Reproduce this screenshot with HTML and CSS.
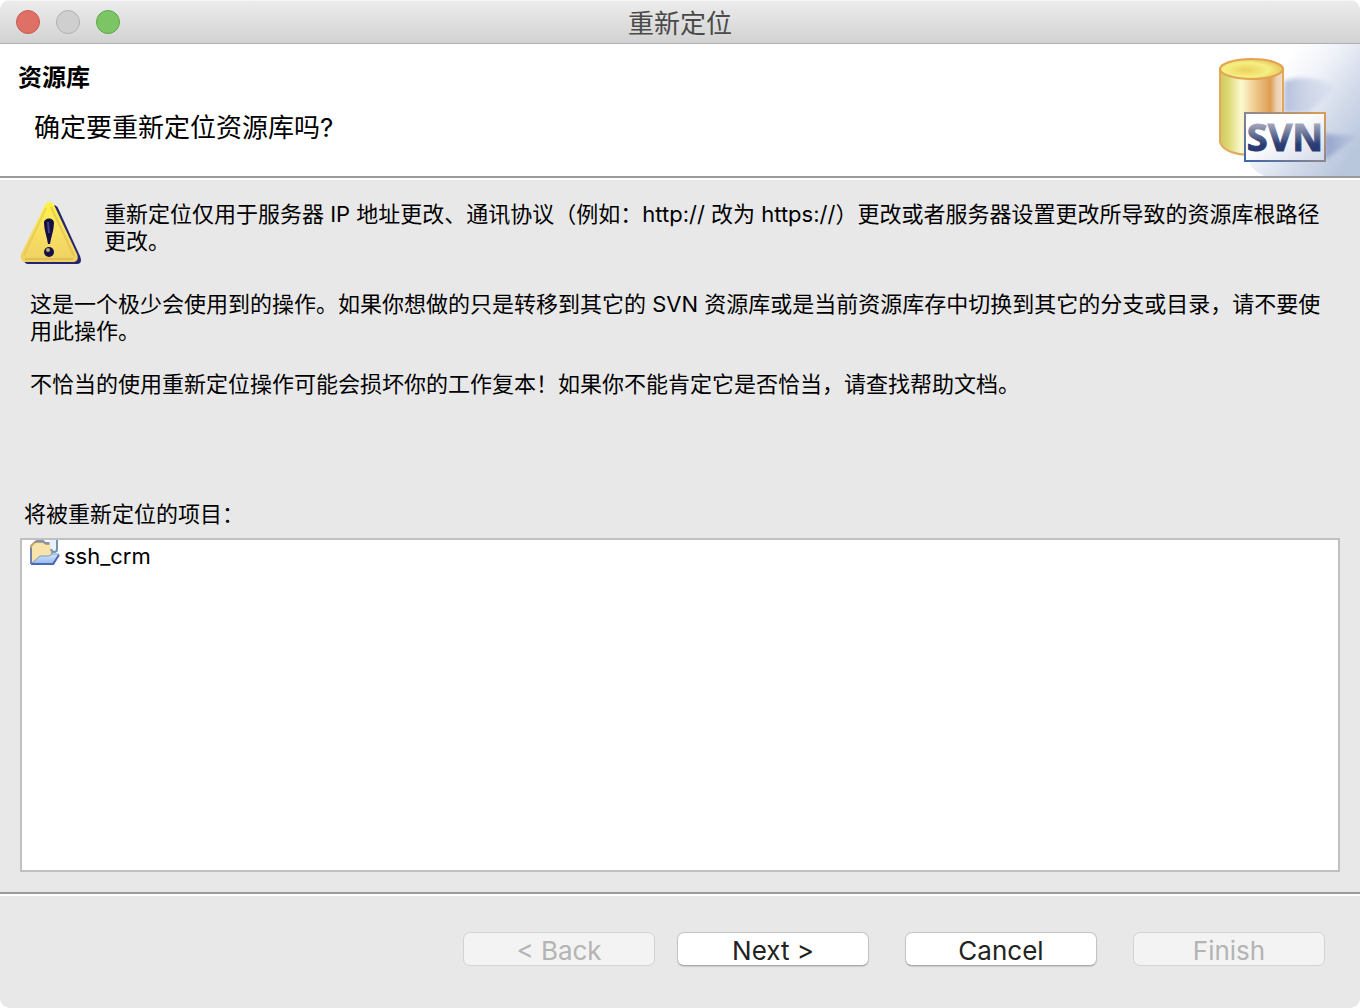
FILE: index.html
```html
<!DOCTYPE html>
<html lang="zh-CN">
<head>
  <meta charset="UTF-8">
  <meta name="viewport" content="width=device-width, initial-scale=1.0">
  <title>重新定位</title>
  <link rel="stylesheet" href="styles.css">
</head>
<body>
<div class="window">
  <div class="titlebar">
    <div class="lights">
      <button type="button" class="light light-close" aria-label="Close"></button>
      <button type="button" class="light light-min" aria-label="Minimize" disabled></button>
      <button type="button" class="light light-zoom" aria-label="Zoom"></button>
    </div>
    <h1>重新定位</h1>
  </div>

  <header class="banner">
    <div class="banner-text">
      <h2>资源库</h2>
      <p>确定要重新定位资源库吗?</p>
    </div>
    <svg class="banner-art" width="150" height="132" viewBox="0 0 150 132" role="img" aria-label="SVN">
      <defs>
        <linearGradient id="sky" gradientUnits="userSpaceOnUse" x1="62" y1="34" x2="150" y2="100">
          <stop offset="0" stop-color="#fff"/>
          <stop offset="0.3" stop-color="#f0f3f9"/>
          <stop offset="0.65" stop-color="#d3dbea"/>
          <stop offset="1" stop-color="#b9c7dd"/>
        </linearGradient>
        <linearGradient id="shade" x1="0" y1="0" x2="1" y2="0">
          <stop offset="0" stop-color="#b4bfdb"/>
          <stop offset="1" stop-color="#cdd6e8" stop-opacity="0.3"/>
        </linearGradient>
        <linearGradient id="shade2" x1="0" y1="0" x2="1" y2="0">
          <stop offset="0" stop-color="#94a3cc"/>
          <stop offset="1" stop-color="#a9b6d8" stop-opacity="0.4"/>
        </linearGradient>
        <linearGradient id="can" x1="0" y1="0" x2="1" y2="0">
          <stop offset="0" stop-color="#d2c95e"/>
          <stop offset="0.12" stop-color="#dbd76f"/>
          <stop offset="0.34" stop-color="#fbf9d2"/>
          <stop offset="0.55" stop-color="#f0cb8e"/>
          <stop offset="0.8" stop-color="#dd9d55"/>
          <stop offset="0.9" stop-color="#eccfae"/>
          <stop offset="1" stop-color="#f3e0ca"/>
        </linearGradient>
        <radialGradient id="lid" cx="0.42" cy="0.55" r="0.6">
          <stop offset="0" stop-color="#ecd05c"/>
          <stop offset="0.6" stop-color="#f4f083"/>
          <stop offset="1" stop-color="#e9bf59"/>
        </radialGradient>
        <linearGradient id="plate" x1="0" y1="0" x2="1" y2="1">
          <stop offset="0.4" stop-color="#fff"/>
          <stop offset="1" stop-color="#d3d9e9"/>
        </linearGradient>
        <linearGradient id="frame" x1="0" y1="1" x2="1" y2="0">
          <stop offset="0" stop-color="#3f67a8"/>
          <stop offset="0.5" stop-color="#8c8791"/>
          <stop offset="1" stop-color="#dc9c50"/>
        </linearGradient>
        <linearGradient id="letters" gradientUnits="userSpaceOnUse" x1="0" y1="80" x2="0" y2="107">
          <stop offset="0" stop-color="#a3a7ba"/>
          <stop offset="0.75" stop-color="#2c3d73"/>
          <stop offset="1" stop-color="#26386f"/>
        </linearGradient>
        <filter id="soft" x="-20%" y="-20%" width="140%" height="140%">
          <feGaussianBlur stdDeviation="2"/>
        </filter>
      </defs>
      <path d="M84 0H150V132H54C38 124 32 112 40 90Z" fill="url(#sky)"/>
      <path d="M74 37C88 31 112 34 126 43L98 69H74Z" fill="url(#shade)" filter="url(#soft)"/>
      <path d="M115 90L148 92L115 116Z" fill="url(#shade2)" filter="url(#soft)"/>
      <path d="M10 25V98C12 106 24 111 42 111S71 106 73 98V25Z" fill="url(#can)" stroke="#e3a860" stroke-width="2"/>
      <ellipse cx="41.500" cy="25" rx="31.500" ry="10" fill="url(#lid)" stroke="#e3a251" stroke-width="2"/>
      <rect x="35" y="69" width="80" height="48" fill="url(#plate)" stroke="url(#frame)" stroke-width="2"/>
      <text class="banner-svn" x="75" y="107" text-anchor="middle" fill="url(#letters)" stroke="url(#letters)">SVN</text>
    </svg>
  </header>

  <main class="content">
    <div class="notice">
      <svg class="warning" width="64" height="64" viewBox="0 0 64 64" role="img" aria-label="Warning">
        <defs>
          <linearGradient id="warn" x1="0" y1="0" x2="0" y2="1">
            <stop offset="0" stop-color="#fff33f"/>
            <stop offset="0.4" stop-color="#fae462"/>
            <stop offset="1" stop-color="#efd063"/>
          </linearGradient>
        </defs>
        <path d="M32 5C35 3 37 5 38 7L60 55C62 60 61 63 57 63H9C5 63 4 61 4 58Z" fill="#23266e"/>
        <path d="M25 4C27 0 32 0 34 4L57 53C59 58 57 61 53 61H6C1 61 0 57 1 53Z" fill="url(#warn)"/>
        <path d="M31 6L54 55" fill="none" stroke="#dfb84f" stroke-width="2" opacity="0.6"/>
        <path d="M26 7L4 54" fill="none" stroke="#dcbc52" stroke-width="2" opacity="0.5"/>
        <path d="M5 58H53" stroke="#d8b04c" stroke-width="2" opacity="0.6"/>
        <path d="M24 22C24 16 34 16 34 22C34 29 31 36 30 43H28C27 36 24 29 24 22Z" fill="#140f45"/>
        <circle cx="29" cy="51" r="5" fill="#140f45"/>
        <path d="M28 21L29 32" stroke="#4a447c" stroke-width="2"/>
        <circle cx="28" cy="49" r="2" fill="#b6a778"/>
      </svg>
      <p>重新定位仅用于服务器 IP 地址更改、通讯协议（例如：http:// 改为 https://）更改或者服务器设置更改所导致的资源库根路径更改。</p>
    </div>
    <p class="para">这是一个极少会使用到的操作。如果你想做的只是转移到其它的 SVN 资源库或是当前资源库存中切换到其它的分支或目录，请不要使用此操作。</p>
    <p class="para">不恰当的使用重新定位操作可能会损坏你的工作复本！如果你不能肯定它是否恰当，请查找帮助文档。</p>

    <h3 id="projects-label">将被重新定位的项目：</h3>
    <ul class="projects" aria-labelledby="projects-label">
      <li>
        <svg width="32" height="26" viewBox="0 0 32 26" aria-hidden="true">
          <defs>
            <linearGradient id="flap" x1="0" y1="0" x2="0" y2="1">
              <stop offset="0" stop-color="#d3e6fb"/>
              <stop offset="1" stop-color="#94b9ea"/>
            </linearGradient>
          </defs>
          <path d="M1 23V6L5 2H14L16 4H22V16L8 23Z" fill="#f8e3ab" stroke="#c0a270" stroke-width="2"/>
          <path d="M5 2L7 1H13L15 3H22" fill="none" stroke="#8792ad" stroke-width="2"/>
          <path d="M19 0H28V12H21Z" fill="#e9f0f8"/>
          <path d="M27 0V9C27 13 22 13 21 9" fill="none" stroke="#7594b4" stroke-width="2"/>
          <path d="M1 24L10 16H19L22 14H29L24 24Z" fill="url(#flap)" stroke="#7b98d0" stroke-width="1"/>
          <path d="M1 24H23L29 15" fill="none" stroke="#4c69b5" stroke-width="2"/>
          <path d="M1 8V24" stroke="#6f7fae" stroke-width="2"/>
        </svg>
        <span>ssh_crm</span>
      </li>
    </ul>
  </main>

  <footer class="actions">
    <div class="pager">
      <button type="button" disabled>&lt; Back</button>
      <button type="button">Next &gt;</button>
    </div>
    <button type="button">Cancel</button>
    <button type="button" disabled>Finish</button>
  </footer>
</div>
</body>
</html>
```

FILE: styles.css
```css
* {
  box-sizing: border-box;
}
body {
  margin: 0;
  background-color: #fff;
  color: #000;
  font-family: Inter, "Noto Sans CJK SC", sans-serif;
  font-size: 22px;
  line-height: 27px;
}
h1, h2, h3, p, ul {
  margin: 0;
  padding: 0;
}
.window {
  display: flex;
  flex-direction: column;
  min-height: 100vh;
  background-color: #e8e8e8;
  border-radius: 10px;
  overflow: hidden;
}

/* Title bar */
.titlebar {
  display: grid;
  grid-template-columns: 1fr auto 1fr;
  align-items: center;
  height: 44px;
  padding: 0 16px;
  background: linear-gradient(#ececec, #d2d2d2);
  border-top: 1px solid #f5f5f5;
  border-bottom: 1px solid #b0b0b0;
}
.titlebar h1 {
  padding-top: 2px;
  color: #4a4a4a;
  font-size: 26px;
  font-weight: 400;
}
.lights {
  display: flex;
  gap: 16px;
}
.light {
  width: 24px;
  height: 24px;
  padding: 0;
  border: 1px solid;
  border-radius: 50%;
}
.light-close {
  background-color: #df7065;
  border-color: #cb5a50;
}
.light-min {
  background-color: #cfcfcf;
  border-color: #b0b0b0;
}
.light-zoom {
  background-color: #7cc564;
  border-color: #5ea648;
}

/* Banner */
.banner {
  display: flex;
  justify-content: space-between;
  background-color: #fff;
  border-bottom: 2px solid #9b9b9b;
}
.banner-text {
  padding: 20px 18px 0;
}
.banner h2 {
  font-size: 24px;
  font-weight: 700;
}
.banner p {
  padding: 23px 16px 0;
  font-size: 26px;
}
.banner-art {
  display: block;
  flex: none;
}
.banner-svn {
  font-family: "Noto Sans", sans-serif;
  font-size: 38px;
  font-weight: 700;
}

/* Message area */
.content {
  display: flex;
  flex: 1;
  flex-direction: column;
  padding: 21px 20px 20px;
  border-top: 2px solid #fff;
}
.notice {
  display: flex;
  gap: 20px;
}
.warning {
  flex: none;
}
.para {
  padding: 26px 10px 0;
}
.content h3 {
  padding: 103px 4px 10px;
  font-size: 22px;
  font-weight: 400;
}
.projects {
  flex: 1;
  background-color: #fff;
  border: 2px solid #c0c0c0;
  list-style: none;
}
.projects li {
  display: flex;
  gap: 2px;
  padding-left: 8px;
}
.projects span {
  padding-top: 3px;
}

/* Buttons */
.actions {
  display: flex;
  justify-content: flex-end;
  gap: 36px;
  height: 116px;
  padding: 36px 35px 0;
  border-top: 2px solid #9b9b9b;
  box-shadow: inset 0 2px #fff;
}
.pager {
  display: flex;
  gap: 22px;
}
.actions button {
  width: 192px;
  height: 34px;
  margin-top: 2px;
  padding: 3px 0 0;
  background-color: #fff;
  border: 1px solid #c4c4c4;
  border-bottom-color: #a9a9a9;
  border-radius: 7px;
  box-shadow: 0 1px 1px rgba(0, 0, 0, 0.12);
  color: #222;
  font-family: inherit;
  font-size: 26px;
  line-height: 30px;
}
.actions button:disabled {
  background-color: #f3f3f3;
  border-color: #d3d3d3;
  box-shadow: none;
  color: #b4b4b4;
}
```
